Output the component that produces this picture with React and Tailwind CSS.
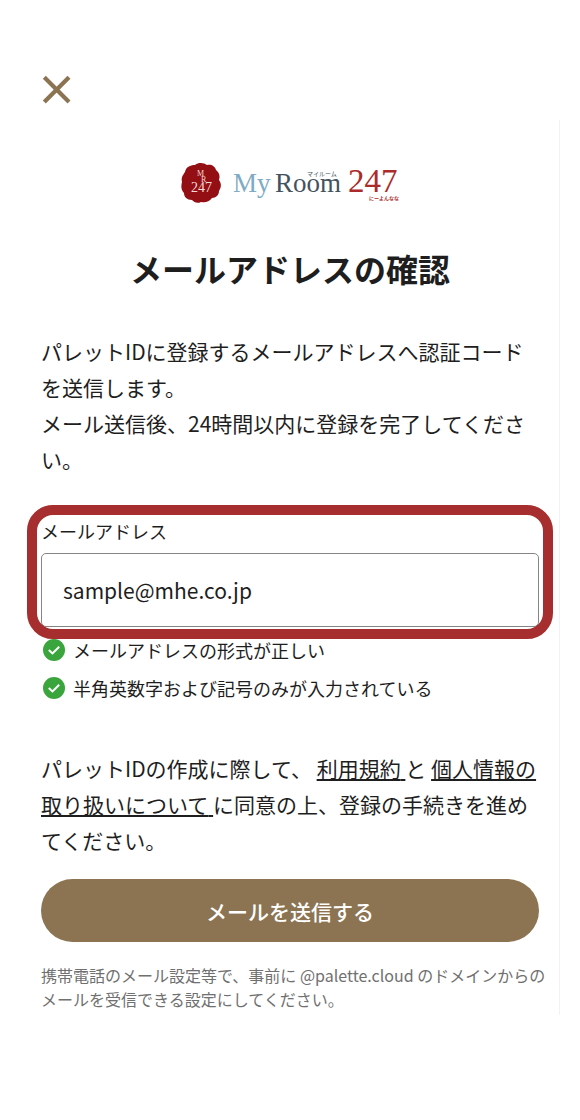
import { useState } from "react";

const CHECKS = [
  "メールアドレスの形式が正しい",
  "半角英数字および記号のみが入力されている",
];

function CloseIcon() {
  return (
    <svg width="30" height="30" viewBox="0 0 30 30" aria-hidden="true">
      <path d="M2.3 2.3 27 27M27 2.3 2.3 27" stroke="#8c7453" strokeWidth="4.2" fill="none" />
    </svg>
  );
}

function CheckIcon() {
  return (
    <svg width="22" height="22" viewBox="0 0 22 22" className="shrink-0" aria-hidden="true">
      <circle cx="11" cy="11" r="11" fill="#3ba53d" />
      <path d="M5.8 10.9 9.5 14.4 16.2 7.8" stroke="#fff" strokeWidth="2" fill="none" />
    </svg>
  );
}

function Logo() {
  return (
    <svg
      width="220"
      height="44"
      viewBox="0 0 220 44"
      role="img"
      aria-label="My Room 247"
      className="font-['Liberation_Serif','Noto_Sans_CJK_JP',serif]"
    >
      {/* wax seal */}
      <path
        d="M15 3C19 0 24 1 27 3C31 2 35 4 36 8C40 11 40 15 39 18C42 22 41 26 39 29C39 33 36 36 32 36C29 40 25 41 21 40C17 42 14 40 12 38C7 38 4 35 4 31C1 28 1 24 2 20C1 15 3 13 5 10C6 5 10 3 15 3Z"
        fill="#930f13"
      />
      <g fill="#f3dcd8">
        <text x="17" y="14" fontSize="8">M</text>
        <text x="21" y="20" fontSize="8">R</text>
        <text x="11" y="30" fontSize="14">247</text>
      </g>
      <text x="53" y="30" fontSize="27" fill="#7fabc4">My</text>
      <text x="95" y="30" fontSize="27" fill="#43535d">Room</text>
      <text x="168" y="30" fontSize="33" fill="#ab2b2c">247</text>
      <text x="127" y="14" fontSize="6" fill="#43535d">マイルーム</text>
      <text x="189" y="38" fontSize="5" fontWeight="700" fill="#ab2b2c">にーよんなな</text>
    </svg>
  );
}

export default function App() {
  const [email, setEmail] = useState("sample@mhe.co.jp");

  return (
    <div className="bg-white pr-5 pb-[105px] font-['Noto_Sans_CJK_JP',sans-serif] text-[21px] leading-9 text-[#1e1e1e]">
      <header className="flex h-[120px] items-end pb-[15px] pl-[42px]">
        <button type="button" aria-label="閉じる">
          <CloseIcon />
        </button>
      </header>

      <main className="border-r border-[#f2f2f2] pt-[42px] pr-5 pb-1 pl-[41px]">
        <div className="flex justify-center">
          <Logo />
        </div>
        <h1 className="mt-[38px] text-center text-[32px] leading-12 font-bold">
          メールアドレスの確認
        </h1>

        <p className="mt-[41px]">
          パレットIDに登録するメールアドレスへ認証コードを送信します。
          <br />
          メール送信後、24時間以内に登録を完了してください。
        </p>

        <form onSubmit={(e) => e.preventDefault()}>
          {/* Email field */}
          <div className="relative mt-10">
            <label htmlFor="email" className="block text-[18px] leading-7">
              メールアドレス
            </label>
            <input
              id="email"
              type="email"
              value={email}
              onChange={(e) => setEmail(e.target.value)}
              className="mt-2 block h-[74px] w-full rounded-[5px] border border-[#858585] bg-white px-[21px] outline-none"
            />
            <div className="pointer-events-none absolute -top-3 -right-3.5 -bottom-3 -left-3.5 rounded-[26px] border-10 border-[#a62e2e]" />
          </div>

          <ul className="mt-[9px] grid gap-[10px] text-[18px] leading-7">
            {CHECKS.map((text) => (
              <li key={text} className="flex items-center gap-2 pl-0.5">
                <CheckIcon />
                {text}
              </li>
            ))}
          </ul>

          <p className="mt-12">
            パレットIDの作成に際して、{" "}
            <a href="#terms" className="underline decoration-2 underline-offset-2">
              利用規約{" "}
            </a>
            と{" "}
            <a href="#privacy" className="underline decoration-2 underline-offset-2">
              個人情報の取り扱いについて{" "}
            </a>
            に同意の上、登録の手続きを進めてください。
          </p>

          <button
            type="submit"
            className="mt-[21px] h-[63px] w-full rounded-full bg-[#8c7453] font-medium text-white"
          >
            メールを送信する
          </button>
        </form>

        <p className="-mr-3 mt-[21px] text-[16px] leading-6 text-[#707070]">
          携帯電話のメール設定等で、事前に @palette.cloud のドメインからのメールを受信できる設定にしてください。
        </p>
      </main>
    </div>
  );
}
